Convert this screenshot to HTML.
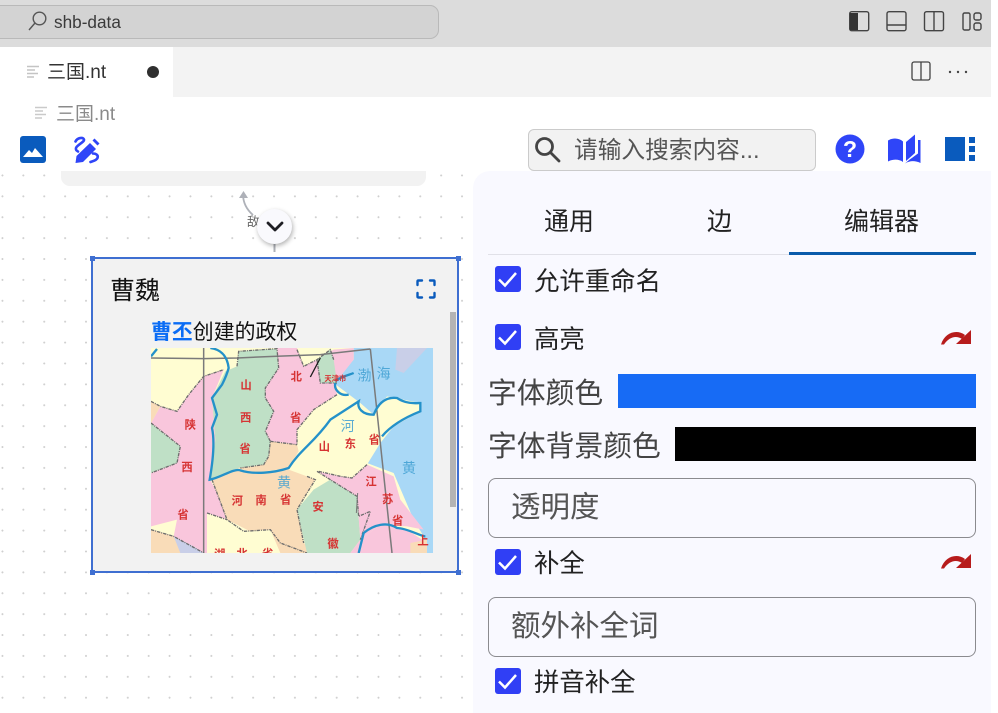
<!DOCTYPE html>
<html lang="zh-CN"><head><meta charset="utf-8"><title>三国.nt</title>
<style>
html,body{margin:0;padding:0;background:#fff}
body{width:998px;height:713px;position:relative;overflow:hidden;font-family:"Liberation Sans","Noto Sans CJK SC",sans-serif}
.a{position:absolute}
.t{position:absolute;white-space:nowrap;line-height:1}
.cb{position:absolute;left:495px;width:26px;height:26px;border-radius:3px;background:#303ff5}
.cb svg{display:block}
.lb{position:absolute;left:534px;font-size:25.4px;line-height:30px;color:#222;white-space:nowrap}
.inp{position:absolute;left:488px;width:486px;height:58px;border:1.5px solid #8b8b8f;border-radius:8px;box-sizing:content-box;font-size:29.5px;line-height:58px;color:#555;text-indent:22px}
.big{position:absolute;left:488px;font-size:28.8px;line-height:36px;color:#444;white-space:nowrap}
</style></head><body>
<div class="a" style="left:0;top:0;width:991px;height:47px;background:#dcdcdc"></div>
<div class="a" style="left:-12px;top:5px;width:449px;height:32px;background:#d3d3d3;border:1.5px solid #b9b9b9;border-radius:9px"></div>
<svg class="a" style="left:27px;top:10px" width="22" height="22" viewBox="0 0 22 22" fill="none" stroke="#555" stroke-width="1.4"><circle cx="12.500" cy="8.500" r="6.300"/><path d="M8 13 2 20"/></svg>
<div class="t" style="left:54px;top:14px;font-size:17.2px;color:#3a3a3a">shb-data</div>
<svg class="a" style="left:848px;top:10px" width="140" height="23" viewBox="0 0 140 23" fill="none" stroke="#444" stroke-width="1.4"><rect x="1.700" y="1.700" width="19" height="19" rx="2"/><path d="M2 3h8v17H2z" fill="#333" stroke="none"/><rect x="39" y="1.700" width="19" height="19" rx="2"/><path d="M39 15h19"/><rect x="76.500" y="1.700" width="19" height="19" rx="2"/><path d="M86 2v18"/><rect x="115" y="3" width="7" height="17" rx="1.500"/><rect x="126" y="3" width="7" height="7" rx="2"/><rect x="126" y="13" width="7" height="7" rx="2"/></svg>

<div class="a" style="left:1px;top:47px;width:990px;height:50px;background:#f3f3f3"></div>
<div class="a" style="left:1px;top:47px;width:172px;height:50px;background:#fff"></div>
<svg class="a" style="left:26px;top:65px" width="14" height="14" viewBox="0 0 14 14" stroke="#c4c4c4" stroke-width="1.4"><path d="M1 1.500h12M1 5h8M1 8.500h11M1 12h7"/></svg>
<div class="t" style="left:47px;top:63px;font-size:19px;color:#333">三国.nt</div>
<div class="a" style="left:147px;top:66px;width:12px;height:12px;border-radius:50%;background:#2f2f2f"></div>
<svg class="a" style="left:911px;top:61px" width="20" height="20" viewBox="0 0 20 20" fill="none" stroke="#444" stroke-width="1.3"><rect x="1" y="1" width="18" height="18" rx="2"/><path d="M10 1v18"/></svg>
<svg class="a" style="left:948px;top:70px" width="20" height="4" viewBox="0 0 20 4" fill="#444"><circle cx="2" cy="2" r="1.200"/><circle cx="10" cy="2" r="1.200"/><circle cx="18" cy="2" r="1.200"/></svg>

<svg class="a" style="left:34px;top:106px" width="14" height="14" viewBox="0 0 14 14" stroke="#cacaca" stroke-width="1.4"><path d="M1 1.500h12M1 5h8M1 8.500h11M1 12h7"/></svg>
<div class="t" style="left:56px;top:105px;font-size:19px;color:#8a8a8a">三国.nt</div>

<!-- canvas -->
<div class="a" style="left:0;top:171px;width:475px;height:542px;background-image:radial-gradient(circle,#cfcfcf 0.8px,transparent 1.1px);background-size:20.9px 20.9px;background-position:-8px -6px"></div>

<!-- toolbar -->
<svg class="a" style="left:20px;top:136px" width="26" height="27" viewBox="0 0 26 27"><rect width="26" height="27" rx="3" fill="#0a5bbd"/><path d="M3 21 9 14l3 3 3-5 8 9z" fill="#fff"/></svg>
<svg class="a" style="left:73px;top:136px" width="28" height="28" viewBox="0 0 28 28" fill="none" stroke="#2f45f8" stroke-width="2.600" stroke-linecap="round"><path d="M2.500 27 3.500 20 17 7l6 6-13 13z" fill="#2f45f8" stroke="none"/><path d="M19.500 4.500 21.500 2.500l5 5-2 2z" fill="#2f45f8" stroke="none"/><path d="M2.500 5.500C4.500 1.500 10 1 11 3.500c.6 2.500-7 5.500-8 8.500-.4 1.500.6 2.800 2 3.500"/><path d="M20 17.500c3.500 0 5.500 2 4.500 4.500-1 2.500-4.500 3-7 4"/></svg>
<div class="a" style="left:528px;top:129px;width:286px;height:40px;background:#f2f2f2;border:1.500px solid #cbcbcb;border-radius:6px"></div>
<svg class="a" style="left:534px;top:136px" width="27" height="27" viewBox="0 0 27 27" fill="none" stroke="#444" stroke-width="2.800"><circle cx="10.500" cy="10.500" r="8"/><path d="M16.500 16.500l8.500 8.500" stroke-linecap="round"/></svg>
<div class="t" style="left:574px;top:140px;font-size:23.7px;color:#555">请输入搜索内容...</div>
<svg class="a" style="left:835px;top:134px" width="30" height="30" viewBox="0 0 30 30"><circle cx="15" cy="15" r="14.500" fill="#2f45f8"/><text x="15" y="23" text-anchor="middle" font-size="23" font-weight="bold" fill="#fff" font-family="Liberation Sans">?</text></svg>
<svg class="a" style="left:888px;top:134px" width="34" height="30" viewBox="0 0 34 30" fill="#2f45f8"><path d="M0 6.500C5 3.500 11 4 15 7.500V28C11 25 5 25 0 27.500z"/><path d="M18 8l9-7.500V19l-9 8z"/><path d="M30 6h2.500v23C27 26.500 22 26.500 17 29.500c3-3 9-7 13-10z"/></svg>
<svg class="a" style="left:945px;top:137px" width="30" height="25" viewBox="0 0 30 25" fill="#0a5bbd"><rect width="20" height="24"/><rect x="24" width="6" height="6"/><rect x="24" y="9" width="6" height="6"/><rect x="24" y="18" width="6" height="6"/></svg>

<!-- top card -->
<div class="a" style="left:61px;top:171px;width:365px;height:15px;background:#f2f2f2;border-radius:0 0 9px 9px"></div>

<!-- edge -->
<svg class="a" style="left:235px;top:188px" width="50" height="66" viewBox="0 0 50 66" fill="none"><path d="M8 6C8 14 11 21 18 27" stroke="#aeb1b8" stroke-width="1.800"/><path d="M4 10 8.500 3 13 10z" fill="#aeb1b8"/><path d="M39.500 55v9" stroke="#aeb1b8" stroke-width="2"/></svg>
<div class="t" style="left:247px;top:216px;font-size:12.500px;color:#666">敌</div>
<div class="a" style="left:257px;top:209px;width:35px;height:35px;border-radius:50%;background:#f9f9fd;box-shadow:1px 2px 5px rgba(0,0,0,.3)"></div>
<svg class="a" style="left:266px;top:220px" width="18" height="14" viewBox="0 0 18 14" fill="none" stroke="#1e1e24" stroke-width="2.800" stroke-linecap="round" stroke-linejoin="round"><path d="M2 3l7 7 7-7"/></svg>

<!-- node -->
<div class="a" style="left:91px;top:257px;width:368px;height:316px;background:#f2f2f2;border:2px solid #3f6fd1;box-sizing:border-box"></div>
<div class="a" style="left:90px;top:256px;width:5px;height:5px;background:#3f6fd1"></div>
<div class="a" style="left:456px;top:256px;width:5px;height:5px;background:#3f6fd1"></div>
<div class="a" style="left:90px;top:570px;width:5px;height:5px;background:#3f6fd1"></div>
<div class="a" style="left:456px;top:570px;width:5px;height:5px;background:#3f6fd1"></div>
<div class="t" style="left:110px;top:279px;font-size:25px;color:#111">曹魏</div>
<svg class="a" style="left:416px;top:279px" width="20" height="20" viewBox="0 0 20 20" fill="none" stroke="#0a5bbd" stroke-width="2.400" stroke-linecap="round"><path d="M1.500 6V2.500q0-1 1-1H6M14 1.500h3.500q1 0 1 1V6M18.500 14v3.500q0 1-1 1H14M6 18.500H2.500q-1 0-1-1V14"/></svg>
<div class="t" style="left:151px;top:323px;font-size:20.900px;color:#111"><b style="color:#0a6cf5">曹丕</b>创建的政权</div>
<div class="a" style="left:450px;top:312px;width:6px;height:195px;background:#b4b4b4"></div>

<!-- map -->
<svg class="a" style="left:151px;top:348px;filter:blur(.35px)" width="282" height="205" viewBox="32 25 846 615">
<rect x="32" y="25" width="846" height="615" fill="#fffdd2"/>
<path d="M640 25H878V640H860L850 590 820 540 760 400 680 370 720 300 800 220 840 190 740 170 700 225 660 190 580 130 640 60z" fill="#a9d8f6"/>
<path d="M770 25h90l-70 75-25-10z" fill="#c9cfe8"/>
<path d="M60 200 110 215 145 165 190 110 250 90 215 175 225 300 210 420 250 500 270 640H32V570L100 590 110 540 32 560 32 400 110 370 120 320 32 250z" fill="#f9c6dc"/>
<path d="M32 250 120 320 110 370 32 400z" fill="#bfe0c6"/>
<path d="M32 185 60 200 32 250z" fill="#f9dcb8"/>
<path d="M32 570 100 590 130 640H32z" fill="#f9dcb8"/>
<path d="M100 590 160 620 190 640H120z" fill="#c9cfe8"/>
<path d="M290 80 295 35 410 27 415 85 375 145 375 175 400 215 375 275 390 305 385 350 370 375 300 385 210 420 225 300 215 175 255 95z" fill="#bfe0c6"/>
<path d="M410 25H470L490 80 530 60 580 30 640 25 640 60 585 130 590 165 520 210 470 270 470 315 390 305 375 275 400 215 375 175 375 145 415 85z" fill="#f9c6dc"/>
<path d="M530 60 570 30 580 60 590 130 540 130z" fill="#bfe0c6"/>
<path d="M390 305 470 315 475 335 445 385 340 400 290 385 370 375 385 350z" fill="#f9dcb8"/>
<path d="M215 420 290 388 340 400 445 390 500 410 525 420 500 460 470 510 490 610 530 640H350L330 575 260 540z" fill="#f9dcb8"/>
<path d="M200 520 260 540 310 575 390 570 420 640H200z" fill="#fffdd2"/>
<path d="M470 510 520 450 570 420 650 470 655 530 660 600 630 640H500z" fill="#bfe0c6"/>
<path d="M530 395 600 410 680 375 760 410 780 480 850 570 800 560 720 555 660 600 650 470 570 420z" fill="#f9c6dc"/>
<path d="M660 600 720 555 800 570 860 610 850 640H630z" fill="#f9c6dc"/>
<path d="M810 610 860 600 860 640H810z" fill="#f9dcb8"/>
<path d="M470 270 520 210 590 165 655 185 520 300 445 385 475 335z" fill="#fffdd2"/>
<path d="M655 185 660 215 700 225 740 172 840 190 840 215 760 260 720 310 680 375 635 415 600 410 535 395 500 410 455 385 520 310z" fill="#fffdd2"/>
<g fill="none" stroke="#7a7a7a" stroke-width="4.500"><path d="M32 55 190 57 290 55 400 50 540 45 690 28"/><path d="M190 25V640"/><path d="M690 28 755 640"/></g>
<g fill="none" stroke="#6d6d6d" stroke-width="4" stroke-dasharray="10 3 3 3"><path d="M32 185 60 200 110 215 145 165 190 110 250 90"/><path d="M32 250 120 320 110 370 32 400"/><path d="M290 80 295 35 410 27 415 85 375 145 375 175 400 215 375 275 390 305 385 350 370 375 300 385"/><path d="M390 305 470 315"/><path d="M590 165 520 210 470 270 470 315"/><path d="M530 60 540 130 590 130"/><path d="M470 30 490 80 530 60 570 30 580 60"/><path d="M215 420 260 540 310 575 390 570 420 610 500 640"/><path d="M200 520 260 540"/><path d="M500 410 525 420 500 460 470 510 490 610"/><path d="M530 395 570 420 650 470 655 530 690 515 660 600"/><path d="M680 375 635 415 600 410 535 395"/><path d="M32 570 100 590 190 640"/></g>
<g fill="none" stroke="#2491c9" stroke-width="7"><path d="M210 25C250 30 262 60 265 85 258 110 250 125 245 135L215 175 230 225 215 265C225 310 215 380 208 420 240 415 280 385 300 392 340 405 400 400 445 385 480 330 520 310 570 240L655 185C650 205 665 225 700 225 710 200 730 170 770 175 800 195 830 190 840 190L840 215C790 235 750 260 725 290"/><path d="M655 640 670 580C700 555 740 545 770 565 800 565 840 590 855 590"/><path d="M585 125C600 110 630 105 640 100M585 130C580 150 600 170 625 165"/><path d="M32 50 50 28"/></g>
<path d="M540 55 510 112" stroke="#1c1c1c" stroke-width="4"/>
<path d="M652 460 648 520" stroke="#777" stroke-width="3"/>
<g fill="#d63333" font-family="Noto Sans CJK SC" font-size="34" font-weight="bold" text-anchor="middle">
<text x="468" y="122">北</text><text x="317" y="148">山</text><text x="316" y="246">西</text><text x="466" y="246">省</text><text x="314" y="339">省</text><text x="150" y="267">陕</text><text x="140" y="394">西</text><text x="128" y="536">省</text><text x="552" y="332">山</text><text x="630" y="323">东</text><text x="702" y="311">省</text><text x="291" y="495">河</text><text x="362" y="493">南</text><text x="436" y="491">省</text><text x="533" y="513">安</text><text x="692" y="438">江</text><text x="742" y="490">苏</text><text x="772" y="554">省</text><text x="578" y="623">徽</text><text x="238" y="655">湖</text><text x="305" y="653">北</text><text x="382" y="653">省</text><text x="848" y="615">上</text><text x="585" y="124" font-size="22">天津市</text></g>
<g fill="#3f9fd2" font-family="Noto Sans CJK SC" font-size="42" text-anchor="middle" opacity=".85"><text x="672" y="122">渤</text><text x="730" y="116">海</text><text x="622" y="274">河</text><text x="806" y="400">黄</text><text x="431" y="444">黄</text></g>
</svg>

<!-- panel -->
<div class="a" style="left:473px;top:171px;width:518px;height:542px;background:#f9f9ff;border-radius:17px 0 0 0"></div>
<div class="t" style="left:544px;top:210px;font-size:25px;color:#222">通用</div>
<div class="t" style="left:707px;top:210px;font-size:25px;color:#222">边</div>
<div class="t" style="left:844px;top:210px;font-size:25px;color:#222">编辑器</div>
<div class="a" style="left:488px;top:254px;width:301px;height:1px;background:#e1e1e8"></div>
<div class="a" style="left:789px;top:252px;width:187px;height:2.500px;background:#0a5bab"></div>

<div class="cb" style="top:266px"><svg width="26" height="26" viewBox="0 0 26 26" fill="none" stroke="#fff" stroke-width="2.500"><path d="M4 13.500l6 6L21 7"/></svg></div>
<div class="lb" style="top:267px">允许重命名</div>
<div class="cb" style="top:324px"><svg width="26" height="26" viewBox="0 0 26 26" fill="none" stroke="#fff" stroke-width="2.500"><path d="M4 13.500l6 6L21 7"/></svg></div>
<div class="lb" style="top:325px">高亮</div>
<svg class="a" style="left:941px;top:329px" width="31" height="17" viewBox="0 0 31 17" fill="#b71c1c"><path d="M0 15.500C4 3 16 0 24 6l-3 4C15 6 8 8 3 15.500z"/><path d="M30 1V15H15z"/></svg>

<div class="big" style="top:376px">字体颜色</div>
<div class="a" style="left:618px;top:374px;width:358px;height:34px;background:#176bf5"></div>
<div class="big" style="top:429px">字体背景颜色</div>
<div class="a" style="left:675px;top:427px;width:301px;height:34px;background:#000"></div>
<div class="inp" style="top:478px">透明度</div>

<div class="cb" style="top:549px"><svg width="26" height="26" viewBox="0 0 26 26" fill="none" stroke="#fff" stroke-width="2.500"><path d="M4 13.500l6 6L21 7"/></svg></div>
<div class="lb" style="top:549px">补全</div>
<svg class="a" style="left:941px;top:553px" width="31" height="17" viewBox="0 0 31 17" fill="#b71c1c"><path d="M0 15.500C4 3 16 0 24 6l-3 4C15 6 8 8 3 15.500z"/><path d="M30 1V15H15z"/></svg>
<div class="inp" style="top:597px">额外补全词</div>
<div class="cb" style="top:668px"><svg width="26" height="26" viewBox="0 0 26 26" fill="none" stroke="#fff" stroke-width="2.500"><path d="M4 13.500l6 6L21 7"/></svg></div>
<div class="lb" style="top:668px">拼音补全</div>
</body></html>
